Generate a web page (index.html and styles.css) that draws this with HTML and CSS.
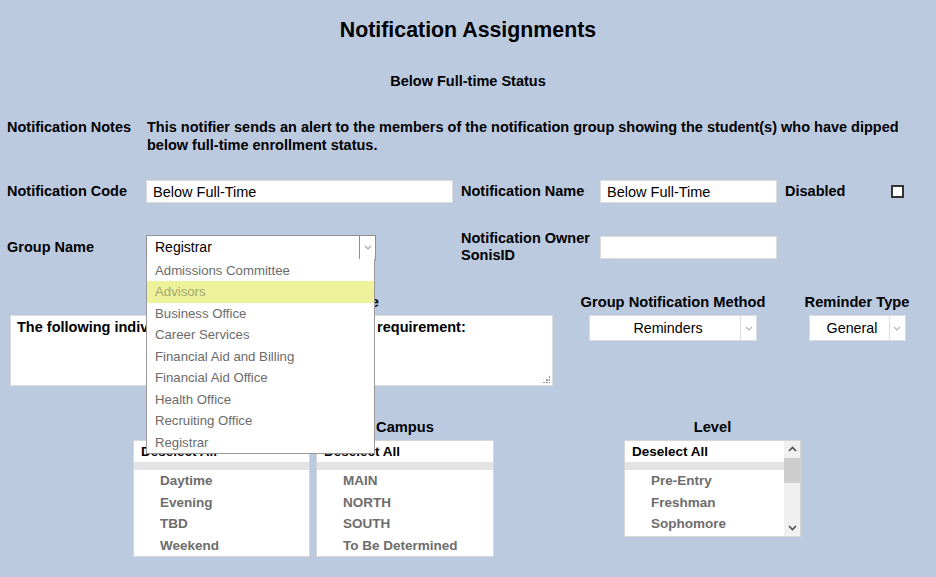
FILE: index.html
```html
<!DOCTYPE html>
<html lang="en">

<head>
    <meta charset="UTF-8">
    <title>Notification Assignments</title>
    <link rel="stylesheet" href="styles.css">
</head>

<body>
    <div class="page">
        <h1 class="title">Notification Assignments</h1>
        <div class="subtitle">Below Full-time Status</div>

        <div class="notes-row">
            <div class="notes-label">Notification Notes</div>
            <div class="notes">This notifier sends an alert to the members of the notification group showing the student(s) who have dipped below full-time enrollment status.</div>
        </div>

        <div class="field-grid">
            <label class="label" for="notifCode">Notification Code</label>
            <div><input type="text" class="text-input code-input" id="notifCode" value="Below Full-Time"></div>
            <label class="label" for="notifName">Notification Name</label>
            <div><input type="text" class="text-input name-input" id="notifName" value="Below Full-Time"></div>
            <label class="label">Disabled</label>
            <span class="checkbox"></span>

            <label class="label">Group Name</label>
            <div>
                <div class="select select-open group-select">
                    <span class="select-value">Registrar</span>
                    <span class="select-arrow">
                        <svg width="8" height="5" viewBox="0 0 8 5"><polyline points="1,1 4,4 7,1" fill="none" stroke="#a8a8a8" stroke-width="1.2"/></svg>
                    </span>
                    <ul class="dropdown">
                        <li>Admissions Committee</li>
                        <li class="hover">Advisors</li>
                        <li>Business Office</li>
                        <li>Career Services</li>
                        <li>Financial Aid and Billing</li>
                        <li>Financial Aid Office</li>
                        <li>Health Office</li>
                        <li>Recruiting Office</li>
                        <li>Registrar</li>
                    </ul>
                </div>
            </div>
            <label class="label" for="ownerId">Notification Owner<br>SonisID</label>
            <div><input type="text" class="text-input name-input" id="ownerId" value=""></div>
        </div>

        <div class="method-row">
            <div class="col col-message">
                <div class="col-label">Group Notification Message</div>
                <div class="message-wrap">
                    <textarea class="message">The following individuals dipped below the full-time requirement:</textarea>
                </div>
            </div>
            <div class="col col-method">
                <div class="col-label">Group Notification Method</div>
                <div class="select method-select">
                    <span class="select-value">Reminders</span>
                    <span class="select-arrow">
                        <svg width="8" height="5" viewBox="0 0 8 5"><polyline points="1,1 4,4 7,1" fill="none" stroke="#b5b5b5" stroke-width="1.2"/></svg>
                    </span>
                </div>
            </div>
            <div class="col col-type">
                <div class="col-label">Reminder Type</div>
                <div class="select type-select">
                    <span class="select-value">General</span>
                    <span class="select-arrow">
                        <svg width="8" height="5" viewBox="0 0 8 5"><polyline points="1,1 4,4 7,1" fill="none" stroke="#b5b5b5" stroke-width="1.2"/></svg>
                    </span>
                </div>
            </div>
        </div>

        <div class="lists-row">
            <div class="col col-session">
                <div class="col-label">Session</div>
                <div class="listbox">
                    <div class="list-body">
                        <div class="list-all">Deselect All</div>
                        <div class="list-group"></div>
                        <div class="list-item">Daytime</div>
                        <div class="list-item">Evening</div>
                        <div class="list-item">TBD</div>
                        <div class="list-item">Weekend</div>
                    </div>
                </div>
            </div>
            <div class="col col-campus">
                <div class="col-label">Campus</div>
                <div class="listbox">
                    <div class="list-body">
                        <div class="list-all">Deselect All</div>
                        <div class="list-group"></div>
                        <div class="list-item">MAIN</div>
                        <div class="list-item">NORTH</div>
                        <div class="list-item">SOUTH</div>
                        <div class="list-item">To Be Determined</div>
                    </div>
                </div>
            </div>
            <div class="col col-level">
                <div class="col-label">Level</div>
                <div class="listbox listbox-short">
                    <div class="list-body">
                        <div class="list-all">Deselect All</div>
                        <div class="list-group"></div>
                        <div class="list-item">Pre-Entry</div>
                        <div class="list-item">Freshman</div>
                        <div class="list-item">Sophomore</div>
                    </div>
                    <div class="scrollbar">
                        <span class="scroll-btn">
                            <svg width="9" height="6" viewBox="0 0 9 6"><polyline points="1,5 4.5,1.5 8,5" fill="none" stroke="#505050" stroke-width="1.6"/></svg>
                        </span>
                        <span class="scroll-thumb"></span>
                        <span class="scroll-track"></span>
                        <span class="scroll-btn">
                            <svg width="9" height="6" viewBox="0 0 9 6"><polyline points="1,1 4.5,4.5 8,1" fill="none" stroke="#505050" stroke-width="1.6"/></svg>
                        </span>
                    </div>
                </div>
            </div>
        </div>
    </div>
</body>

</html>
```

FILE: styles.css
```css
body {
    margin: 0;
    background-color: #bccae0;
    font-family: "Liberation Sans", Arial, sans-serif;
    font-size: 13px;
    color: #000;
}

.page {
    padding: 18px 7px 0;
}

.title {
    margin: 0;
    font-size: 21.33px;
    line-height: 24px;
    text-align: center;
}

.subtitle {
    margin-top: 31px;
    font-size: 14.5px;
    font-weight: bold;
    line-height: 16px;
    text-align: center;
}

/* notes */

.notes-row {
    display: flex;
    margin-top: 29px;
    font-size: 14.5px;
    font-weight: bold;
    line-height: 18px;
}

.notes-label {
    width: 140px;
    flex-shrink: 0;
}

.notes {
    width: 775px;
}

/* code / name / group */

.field-grid {
    display: grid;
    grid-template-columns: 139px 315px 139px 185px 106px 13px;
    row-gap: 27px;
    align-items: center;
    margin-top: 26px;
}

.label {
    font-size: 14.5px;
    font-weight: bold;
    line-height: 17px;
}

.text-input {
    display: block;
    box-sizing: border-box;
    height: 23px;
    padding: 0 6px;
    border: 1px solid #dcdcdc;
    background: #fff;
    font: inherit;
    font-size: 14.5px;
    color: #000;
    outline: none;
}

.code-input {
    width: 307px;
}

.name-input {
    width: 177px;
}

.checkbox {
    display: block;
    box-sizing: border-box;
    width: 13px;
    height: 13px;
    border: 2px solid #333;
    background: #fff;
}

/* fake selects */

.select {
    position: relative;
    display: flex;
    box-sizing: border-box;
    border: 1px solid #dcdcdc;
    background: #fff;
}

.select-value {
    flex: 1;
    display: flex;
    align-items: center;
    font-size: 14.3px;
}

.select-arrow {
    width: 15px;
    display: flex;
    align-items: center;
    justify-content: center;
    border-left: 1px solid #dcdcdc;
}

.group-select {
    width: 230px;
    height: 25px;
    border-color: #8f8f8f;
}

.group-select .select-value {
    padding-left: 8px;
    font-size: 14px;
}

.group-select .select-arrow {
    border-left-color: #8f8f8f;
}

.dropdown {
    position: absolute;
    top: 100%;
    left: -1px;
    z-index: 10;
    width: 229px;
    box-sizing: border-box;
    margin: 0;
    padding: 1px 0 0;
    list-style: none;
    background: #fff;
    border: 1px solid #999;
    border-top: none;
}

.dropdown li {
    height: 21.5px;
    line-height: 21.5px;
    padding-left: 8px;
    font-size: 13.2px;
    color: #6b6b6b;
}

.dropdown li.hover {
    background-color: #eef39b;
    color: #a3a470;
}

/* message / method / type */

.method-row {
    display: flex;
    margin-top: 30px;
}

.col {
    display: flex;
    flex-direction: column;
    align-items: center;
}

.col-label {
    font-size: 14.67px;
    font-weight: bold;
    line-height: 16px;
    margin-bottom: 5px;
    white-space: nowrap;
}

.col-message {
    width: 543px;
    margin-left: 3px;
}

.col-method {
    width: 186px;
    margin-left: 27px;
}

.col-type {
    width: 104px;
    margin-left: 39px;
}

.message-wrap {
    position: relative;
    height: 71px;
}

/* dotted resize grip */
.message-wrap::after {
    content: "";
    position: absolute;
    right: 3px;
    bottom: 3px;
    width: 7px;
    height: 7px;
    background:
        radial-gradient(circle, #9a9a9a 0.8px, transparent 1px) 6px 0 / 2px 2px no-repeat,
        radial-gradient(circle, #9a9a9a 0.8px, transparent 1px) 3px 3px / 2px 2px no-repeat,
        radial-gradient(circle, #9a9a9a 0.8px, transparent 1px) 6px 3px / 2px 2px no-repeat,
        radial-gradient(circle, #9a9a9a 0.8px, transparent 1px) 0 6px / 2px 2px no-repeat,
        radial-gradient(circle, #9a9a9a 0.8px, transparent 1px) 3px 6px / 2px 2px no-repeat,
        radial-gradient(circle, #9a9a9a 0.8px, transparent 1px) 6px 6px / 2px 2px no-repeat;
}

.message {
    display: block;
    box-sizing: border-box;
    width: 543px;
    height: 71px;
    padding: 3px 6px;
    border: 1px solid #dcdcdc;
    font: inherit;
    font-size: 14.5px;
    font-weight: bold;
    line-height: 16px;
    color: #000;
    outline: none;
    resize: none;
}

.method-select {
    width: 168px;
    height: 26px;
}

.type-select {
    width: 97px;
    height: 26px;
}

.method-select .select-value,
.type-select .select-value {
    justify-content: center;
    padding-left: 6px;
}

/* list boxes */

.lists-row {
    display: flex;
    margin-top: 33px;
}

.col-session {
    width: 177px;
    margin-left: 126px;
}

.col-campus {
    width: 178px;
    margin-left: 6px;
}

.col-level {
    width: 177px;
    margin-left: 130px;
}

.listbox {
    display: flex;
    box-sizing: border-box;
    width: 100%;
    height: 117px;
    border: 1px solid #d6d6d6;
    background: #fff;
    overflow: hidden;
}

.listbox-short {
    height: 97px;
}

.list-body {
    flex: 1;
}

.list-all {
    height: 21px;
    line-height: 21px;
    padding-left: 7px;
    font-size: 13.5px;
    font-weight: bold;
}

.list-group {
    height: 8px;
    background-color: #e3e3e3;
}

.list-item {
    height: 21.5px;
    line-height: 21.5px;
    padding-left: 26px;
    font-size: 13.5px;
    font-weight: bold;
    color: #6d6d6d;
}

.scrollbar {
    width: 16px;
    display: flex;
    flex-direction: column;
    background-color: #f0f0f0;
}

.scroll-btn {
    height: 16px;
    display: flex;
    align-items: center;
    justify-content: center;
}

.scroll-thumb {
    height: 25px;
    margin-top: 1px;
    background-color: #cdcdcd;
}

.scroll-track {
    flex: 1;
}
```
